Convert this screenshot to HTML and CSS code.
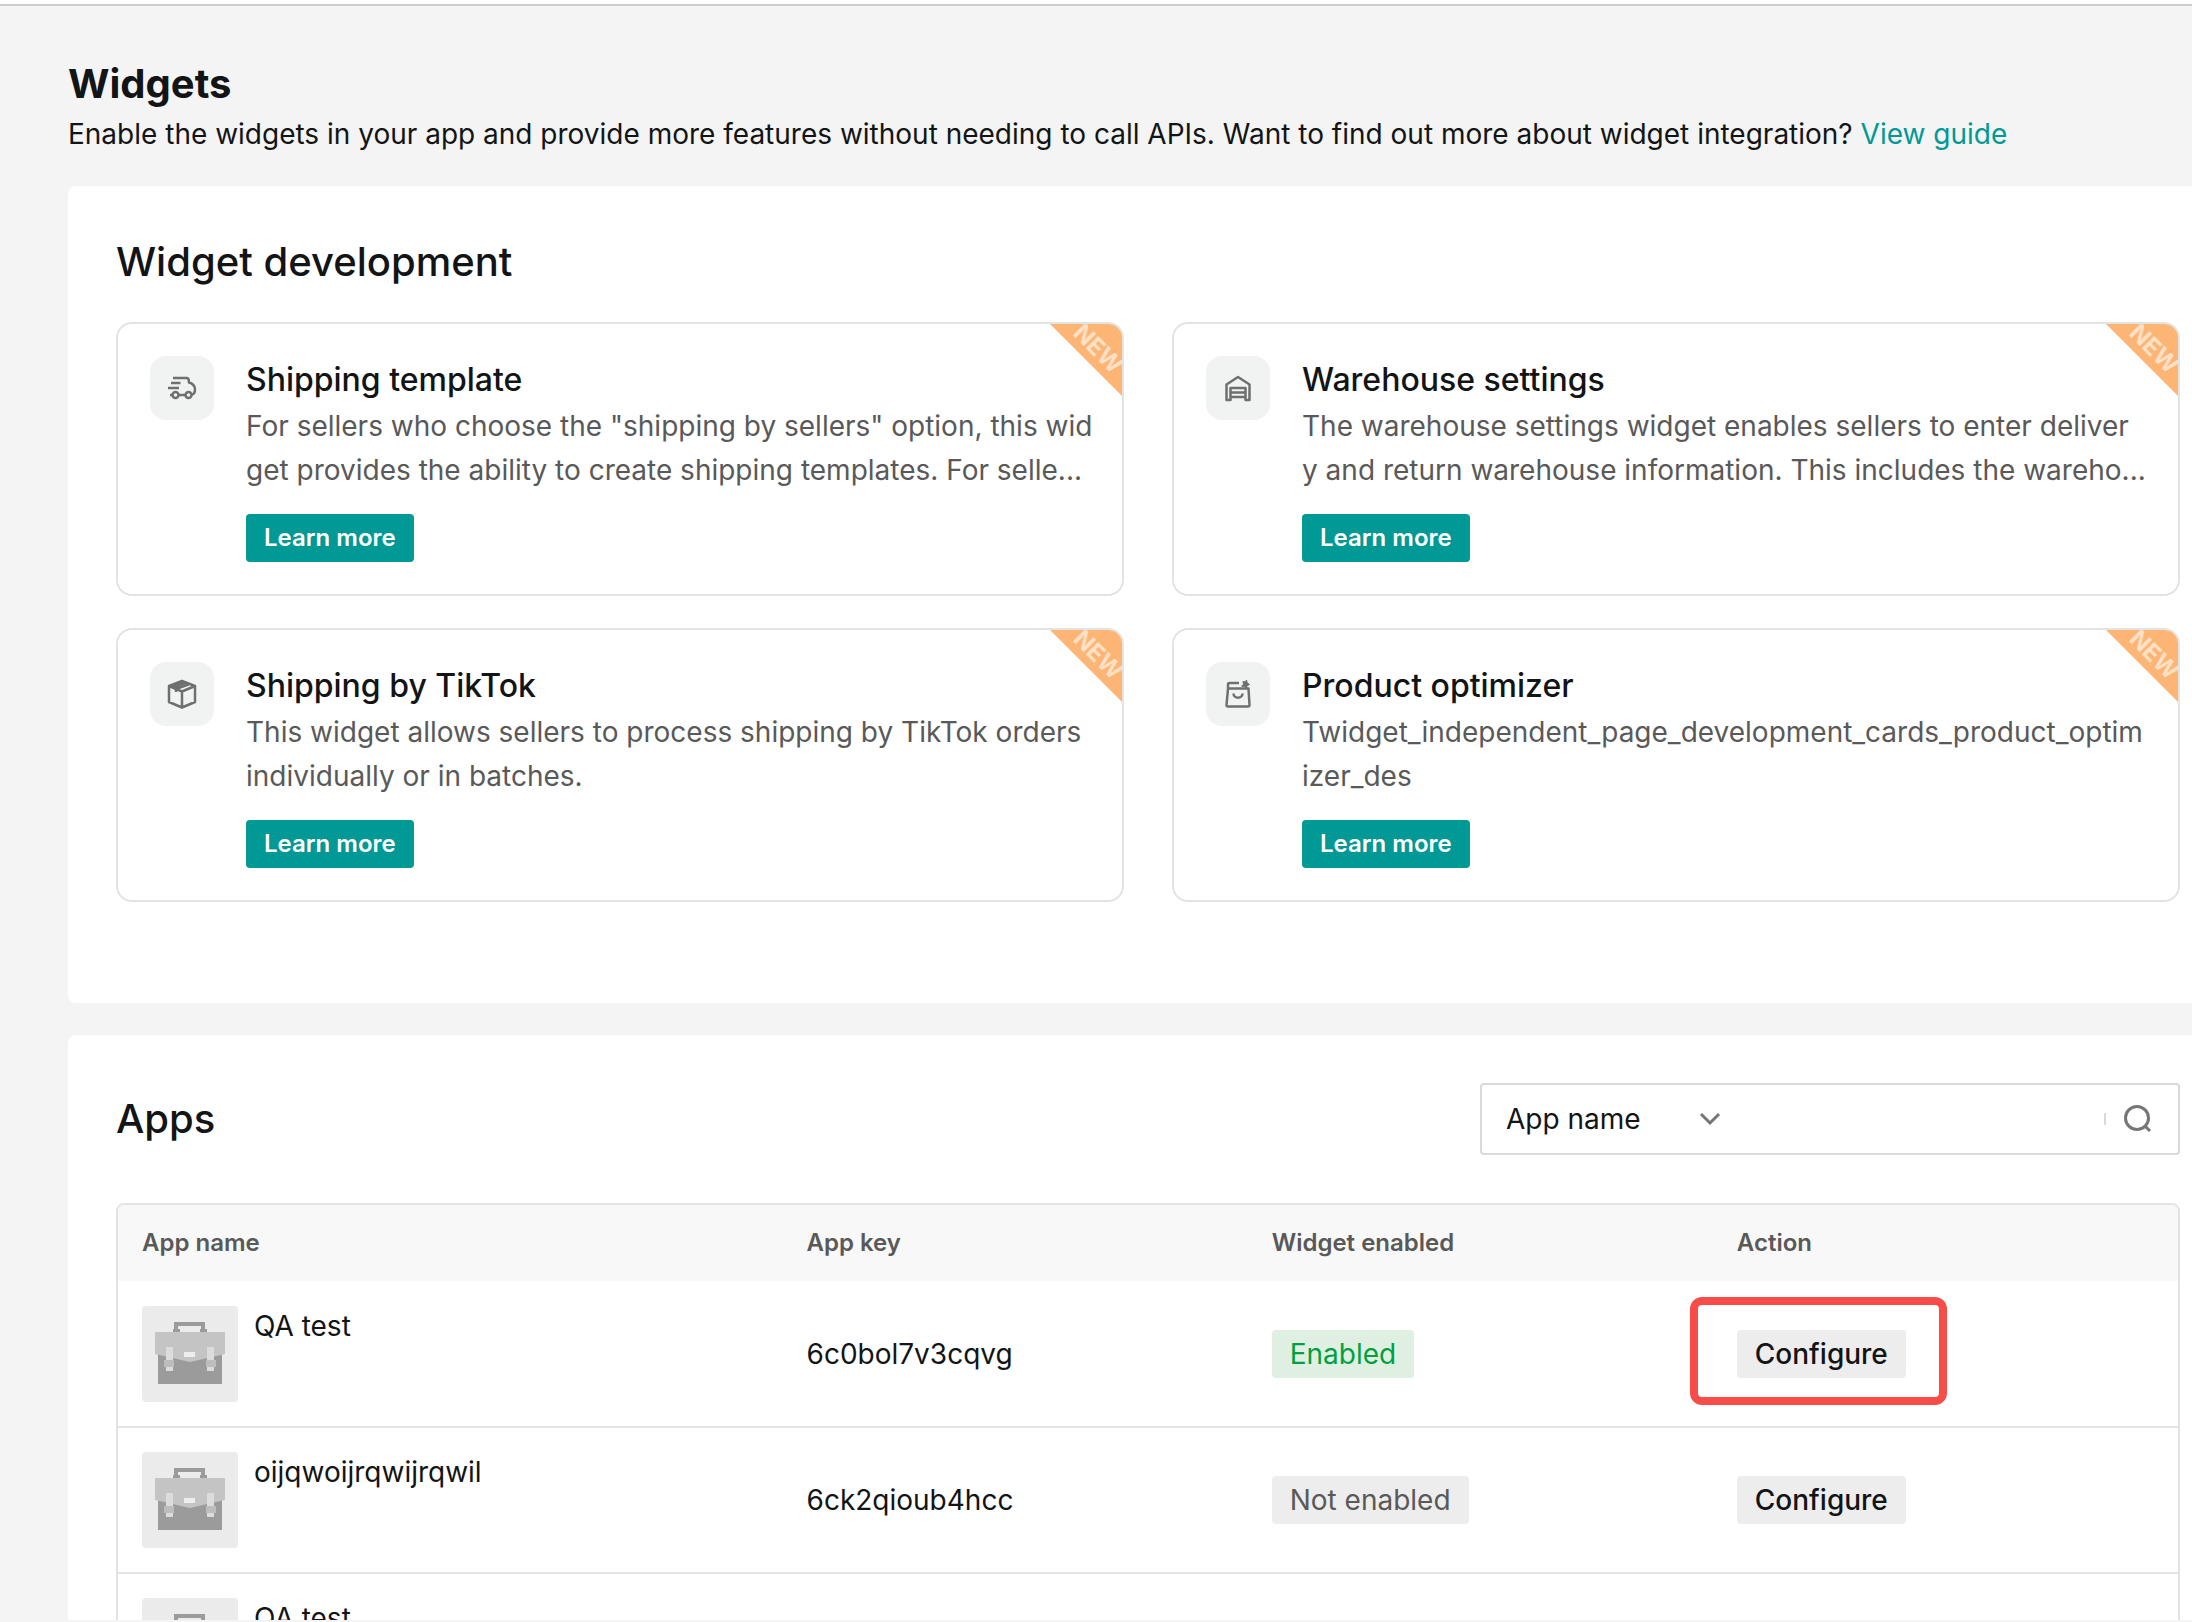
FILE: index.html
```html
<!DOCTYPE html>
<html lang="en">
  <head>
    <meta charset="UTF-8" />
    <meta name="viewport" content="width=device-width, initial-scale=1.0" />
    <title>Widgets</title>
    <link rel="stylesheet" href="styles.css" />
  </head>
  <body>
    <svg class="sprite" aria-hidden="true">
      <symbol id="briefcase" viewBox="0 0 96 96">
        <path fill="#9b9b9b" d="M32 16h31v7h2v3h-7v-3h1v-3H36v3h2v3h-7v-3h1z" />
        <path fill="#9b9b9b" d="M16 46h64v32H16z" />
        <path fill="#c4c4c4" d="M13 26h70v22l-35 8-35-8z" />
        <path fill="#dcdcdc" d="M24 41h7v24h-7zM65 41h7v24h-7z" />
        <path fill="#bdbdbd" d="M22 54h10v7H22zM64 54h10v7H64z" />
        <path fill="#ededed" d="M42 46h11v5H42z" />
      </symbol>
      <symbol id="ribbon" viewBox="0 0 72 72">
        <path fill="#fdb575" d="M0 0h72v72z" />
        <text class="ribbon-text" x="48" y="33" text-anchor="middle" transform="rotate(45 48 25)">NEW</text>
      </symbol>
    </svg>

    <main class="page">
      <header class="page-header">
        <h1>Widgets</h1>
        <p>
          Enable the widgets in your app and provide more features without needing to call APIs. Want to find out more about widget integration?
          <a href="#guide">View guide</a>
        </p>
      </header>

      <section class="panel">
        <h2>Widget development</h2>
        <div class="cards">
          <article class="card">
            <div class="card-icon">
              <svg viewBox="0 0 64 64">
                <path d="M23 22h13.500q2 0 2.200 2l.3 2.500q5.500 1.500 6 6.500 0 5-3 5.500M21 27h9.500M18 32h11M20 39h2.500M28.500 39h7" />
                <circle cx="25.500" cy="39" r="3" />
                <circle cx="38.500" cy="39" r="3" />
              </svg>
            </div>
            <div class="card-body">
              <h3>Shipping template</h3>
              <p class="clipped">For sellers who choose the "shipping by sellers" option, this wid<br />get provides the ability to create shipping templates. For selle...</p>
              <button type="button" class="btn-primary">Learn more</button>
            </div>
            <svg class="ribbon"><use href="#ribbon" /></svg>
          </article>

          <article class="card">
            <div class="card-icon">
              <svg viewBox="0 0 64 64">
                <path d="M20.500 44V28.500L32 21l11.500 7.500V44h-4V32h-15v12zM25.500 36.500h14M25.500 41h14" />
              </svg>
            </div>
            <div class="card-body">
              <h3>Warehouse settings</h3>
              <p class="clipped">The warehouse settings widget enables sellers to enter deliver<br />y and return warehouse information. This includes the wareho...</p>
              <button type="button" class="btn-primary">Learn more</button>
            </div>
            <svg class="ribbon"><use href="#ribbon" /></svg>
          </article>

          <article class="card">
            <div class="card-icon">
              <svg viewBox="0 0 64 64">
                <path d="M32 19l13 5v16l-13 5.500L19 40V24zM19 24l13 5.500L45 24M32 29.500v16M35.500 20.500l-13 5M39.500 22L26 27v3" />
              </svg>
            </div>
            <div class="card-body">
              <h3>Shipping by TikTok</h3>
              <p>This widget allows sellers to process shipping by TikTok orders individually or in batches.</p>
              <button type="button" class="btn-primary">Learn more</button>
            </div>
            <svg class="ribbon"><use href="#ribbon" /></svg>
          </article>

          <article class="card">
            <div class="card-icon">
              <svg viewBox="0 0 64 64">
                <path d="M22 26.500h20.500L43.500 43q0 1.500-1.500 1.500H22q-1.500 0-1.500-1.500zL22 22.500q0-1.500 1.500-1.500H33M27.500 31.500c0 5.500 9 5.500 9 0" />
                <path class="solid" d="M40.500 18l.7 2.800 2.300 1.700-2.500 1.200L40.500 26.500l-1.900-2.100-3-.2 1.900-2-.6-2.700 2.400.5z" />
              </svg>
            </div>
            <div class="card-body">
              <h3>Product optimizer</h3>
              <p class="break">Twidget_independent_page_development_cards_product_optimizer_des</p>
              <button type="button" class="btn-primary">Learn more</button>
            </div>
            <svg class="ribbon"><use href="#ribbon" /></svg>
          </article>
        </div>
      </section>

      <section class="panel">
        <div class="panel-head">
          <h2>Apps</h2>
          <form class="search">
            <div class="search-type">
              <select aria-label="Search by">
                <option>App name</option>
                <option>App key</option>
              </select>
              <svg viewBox="0 0 24 24"><path d="M3 7l9 9 9-9" /></svg>
            </div>
            <input type="text" aria-label="Search apps" />
            <button type="button" aria-label="Search">
              <svg viewBox="0 0 32 32">
                <circle cx="15" cy="15" r="11.500" />
                <path d="M23 23l5 5" />
              </svg>
            </button>
          </form>
        </div>

        <div class="table-wrap">
          <table>
            <colgroup>
              <col class="col-name" />
              <col class="col" />
              <col class="col" />
              <col class="col" />
            </colgroup>
            <thead>
              <tr>
                <th>App name</th>
                <th>App key</th>
                <th>Widget enabled</th>
                <th>Action</th>
              </tr>
            </thead>
            <tbody>
              <tr>
                <td>
                  <div class="app">
                    <svg class="thumb"><use href="#briefcase" /></svg>
                    <span>QA test</span>
                  </div>
                </td>
                <td>6c0bol7v3cqvg</td>
                <td><span class="tag tag-on">Enabled</span></td>
                <td>
                  <div class="highlight">
                    <button type="button" class="btn-plain">Configure</button>
                  </div>
                </td>
              </tr>
              <tr>
                <td>
                  <div class="app">
                    <svg class="thumb"><use href="#briefcase" /></svg>
                    <span>oijqwoijrqwijrqwil</span>
                  </div>
                </td>
                <td>6ck2qioub4hcc</td>
                <td><span class="tag">Not enabled</span></td>
                <td><button type="button" class="btn-plain">Configure</button></td>
              </tr>
              <tr>
                <td>
                  <div class="app">
                    <svg class="thumb"><use href="#briefcase" /></svg>
                    <span>QA test</span>
                  </div>
                </td>
                <td></td>
                <td></td>
                <td></td>
              </tr>
            </tbody>
          </table>
        </div>
      </section>
    </main>
  </body>
</html>
```

FILE: styles.css
```css
* {
  box-sizing: border-box;
}

body {
  margin: 0;
  height: 100vh;
  display: flex;
  flex-direction: column;
  border-top: 4px solid #fff;
  border-bottom: 2px solid #f4f4f4;
  background: #f4f4f4;
  color: #121415;
  font-family: Inter, "Liberation Sans", sans-serif;
  font-size: 28px;
  line-height: 40px;
}

h1,
h2,
h3,
p {
  margin: 0;
}

button,
input,
select {
  font: inherit;
  color: inherit;
  border: none;
}

button {
  cursor: pointer;
}

.sprite {
  display: none;
}

.page {
  flex: 1;
  min-height: 0;
  overflow: hidden;
  padding: 50px 0 0 68px;
  border-top: 2px solid #ccc;
}

.page-header {
  margin-bottom: 30px;
}

.page-header p {
  line-height: 44px;
}

.page-header a {
  color: #009995;
  text-decoration: none;
}

h1,
h2 {
  font-size: 40px;
  line-height: 56px;
}

h1 {
  font-weight: 700;
}

h2 {
  font-weight: 500;
}

.panel {
  background: #fff;
  border-radius: 8px 0 0 8px;
  padding: 48px 12px 101px 48px;
  margin-bottom: 32px;
}

/* widget cards */
.cards {
  display: grid;
  grid-template-columns: 1fr 1fr;
  gap: 32px 48px;
  margin-top: 32px;
}

.card {
  position: relative;
  display: flex;
  gap: 32px;
  padding: 32px;
  border: 2px solid #e3e3e3;
  border-radius: 16px;
  overflow: hidden;
}

.card-icon {
  flex: none;
  width: 64px;
  height: 64px;
  border-radius: 16px;
  background: #f1f3f3;
}

.card-icon svg {
  display: block;
  fill: none;
  stroke: #6e7070;
  stroke-width: 2.5;
  stroke-linejoin: round;
}

.card-icon .solid {
  fill: #6e7070;
  stroke-width: 1;
}

.card-body {
  flex: 1;
  min-width: 0;
}

.card h3 {
  font-size: 32px;
  font-weight: 500;
  line-height: 48px;
}

.card p {
  color: #595959;
  line-height: 44px;
  margin-bottom: 22px;
}

.card .clipped {
  white-space: nowrap;
}

.card .break {
  word-break: break-all;
}

.ribbon {
  position: absolute;
  top: 0;
  right: 0;
  width: 72px;
  height: 72px;
}

.ribbon-text {
  fill: #fee0c6;
  font-size: 24px;
  font-weight: 700;
}

.btn-primary,
.btn-plain,
.tag {
  display: block;
  width: fit-content;
  height: 48px;
  padding: 0 18px;
  border-radius: 4px;
  line-height: 48px;
}

.btn-primary {
  background: #009995;
  color: #fff;
  font-size: 24px;
  font-weight: 600;
}

.btn-plain {
  background: #ededed;
  font-weight: 500;
}

.tag {
  background: #ededed;
  color: #595959;
}

.tag-on {
  background: #dff0e2;
  color: #00a03e;
}

/* apps */
.panel-head {
  display: flex;
  justify-content: space-between;
  align-items: center;
  margin-bottom: 48px;
}

.search {
  display: flex;
  align-items: center;
  width: 700px;
  height: 72px;
  border: 2px solid #d9d9d9;
  border-radius: 4px;
}

.search svg {
  fill: none;
  stroke: #757575;
  stroke-width: 3;
}

.search-type {
  position: relative;
  width: 244px;
}

.search select {
  appearance: none;
  width: 100%;
  height: 68px;
  padding: 0 24px;
  background: none;
}

.search-type svg {
  position: absolute;
  right: 4px;
  top: 22px;
  width: 24px;
  height: 24px;
  pointer-events: none;
}

.search input {
  flex: 1;
  min-width: 0;
  height: 68px;
  background: none;
}

.search button {
  display: flex;
  align-items: center;
  height: 12px;
  padding: 0 24px 0 16px;
  border-left: 2px solid #d9d9d9;
  background: none;
}

.search button svg {
  width: 32px;
  height: 32px;
}

.table-wrap {
  border: 2px solid #e3e3e3;
  border-radius: 8px;
  overflow: hidden;
}

table {
  width: 100%;
  table-layout: fixed;
  border-collapse: collapse;
}

.col-name {
  width: 200px;
}

.col {
  width: 140px;
}

th {
  height: 76px;
  padding: 0 24px;
  background: #f8f8f8;
  color: #595959;
  font-size: 24px;
  font-weight: 600;
  text-align: left;
}

td {
  height: 146px;
  padding: 24px;
  border-bottom: 2px solid #e3e3e3;
}

.app {
  display: flex;
  gap: 16px;
}

.thumb {
  flex: none;
  width: 96px;
  height: 96px;
  border-radius: 4px;
  background: #ebebeb;
}

.highlight {
  position: relative;
  width: fit-content;
}

.highlight::after {
  content: "";
  position: absolute;
  inset: -33px -41px -27px -47px;
  border: 8px solid #f74c48;
  border-radius: 12px;
  pointer-events: none;
}
```
